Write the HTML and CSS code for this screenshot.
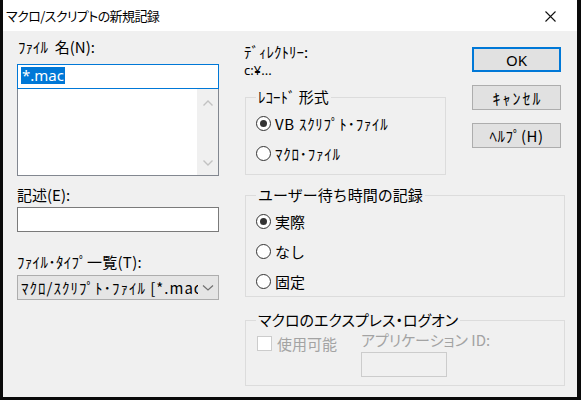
FILE: index.html
```html
<!DOCTYPE html>
<html lang="ja">
<head>
<meta charset="utf-8">
<title>マクロ/スクリプトの新規記録</title>
<link rel="stylesheet" href="styles.css">
</head>
<body>
<div class="window">
  <div class="titlebar">
    <span class="title">マクロ/スクリプトの新規記録</span>
    <svg class="close" width="11" height="11" viewBox="0 0 11 11"><path d="M0.5 0.5 L10.5 10.5 M10.5 0.5 L0.5 10.5" stroke="#111" stroke-width="1.1" fill="none"/></svg>
  </div>
  <div class="content">
    <div class="left">
      <div class="label lbl-name">ﾌｧｲﾙ&nbsp; 名(N):</div>
      <div class="input focused"><span class="sel">*.mac</span></div>
      <div class="list">
        <div class="scroll">
          <svg width="12" height="8" viewBox="0 0 12 8"><path d="M1.5 6.5 L6 2 L10.5 6.5" stroke="#c2c2c2" stroke-width="1.4" fill="none"/></svg>
          <svg width="12" height="8" viewBox="0 0 12 8"><path d="M1.5 1.5 L6 6 L10.5 1.5" stroke="#c2c2c2" stroke-width="1.4" fill="none"/></svg>
        </div>
      </div>
      <div class="label lbl-desc">記述(E):</div>
      <div class="input plain"></div>
      <div class="label lbl-type">ﾌｧｲﾙ･ﾀｲﾌﾟ一覧(T):</div>
      <div class="combo">
        <span class="combo-text">ﾏｸﾛ/ｽｸﾘﾌﾟﾄ･ﾌｧｲﾙ [*.mac]</span>
        <svg class="chev" width="12" height="8" viewBox="0 0 12 8"><path d="M1 1.5 L6 6 L11 1.5" stroke="#707070" stroke-width="1.2" fill="none"/></svg>
      </div>
    </div>
    <div class="right">
      <div class="top">
        <div class="mid">
          <div class="label dir">ﾃﾞｨﾚｸﾄﾘｰ:</div>
          <div class="path">c:¥...</div>
          <fieldset class="group g1">
            <legend>ﾚｺｰﾄﾞ 形式</legend>
            <div class="opt"><span class="radio on"></span><span>VB ｽｸﾘﾌﾟﾄ･ﾌｧｲﾙ</span></div>
            <div class="opt"><span class="radio"></span><span>ﾏｸﾛ･ﾌｧｲﾙ</span></div>
          </fieldset>
        </div>
        <div class="buttons">
          <div class="btn default">OK</div>
          <div class="btn cancel">ｷｬﾝｾﾙ</div>
          <div class="btn">ﾍﾙﾌﾟ(H)</div>
        </div>
      </div>
      <fieldset class="group g2">
        <legend>ユーザー待ち時間の記録</legend>
        <div class="opt"><span class="radio on"></span><span>実際</span></div>
        <div class="opt"><span class="radio"></span><span>なし</span></div>
        <div class="opt"><span class="radio"></span><span>固定</span></div>
      </fieldset>
      <fieldset class="group g3">
        <legend class="pl">マクロのエクスプレス・ログオン</legend>
        <div class="g3row">
          <div class="chk-row"><span class="check"></span><span class="dis">使用可能</span></div>
          <div class="appcol">
            <div class="dis pl applbl">アプリケーション ID:</div>
            <div class="input disabled"></div>
          </div>
        </div>
      </fieldset>
    </div>
  </div>
</div>
</body>
</html>
```

FILE: styles.css
```css
* { box-sizing: border-box; }
html, body {
  margin: 0;
  padding: 0;
  background: #0a0a0a;
  width: 581px;
  height: 400px;
  overflow: hidden;
}
body {
  font-family: "Noto Sans CJK JP", "Noto Sans", sans-serif;
  font-size: 15px;
  color: #000;
}
.window {
  margin-left: 3px;
  width: 574px;
  height: 397px;
  background: #f0f0f0;
  display: flex;
  flex-direction: column;
}
.titlebar {
  height: 31px;
  background: #fff;
  display: flex;
  align-items: center;
  padding-left: 3px;
  padding-right: 21px;
}
.title {
  flex: 1;
  font-size: 13px;
  font-feature-settings: "palt";
  letter-spacing: -0.6px;
  line-height: 18px;
}
.close { display: block; margin-top: 1px; }
.content {
  display: flex;
  padding-left: 14px;
  gap: 25px;
}
.left {
  width: 202px;
  display: flex;
  flex-direction: column;
}
.label {
  line-height: 18px;
  height: 18px;
  white-space: nowrap;
}
.lbl-name { margin-top: 7px; padding-left: 1px; }
.input {
  height: 25px;
  background: #fff;
  border: 1px solid #7a7a7a;
}
.input.focused {
  margin-top: 8px;
  border-color: #0078d7;
  padding: 2px 0 0 3px;
  line-height: 17px;
  font-family: "Noto Sans", sans-serif;
  font-size: 15px;
}
.sel {
  background: #0078d7;
  color: #fff;
  display: inline-block;
  padding: 0 1px;
}
.list {
  height: 87px;
  background: #fff;
  border: 1px solid #828790;
  border-top: none;
  display: flex;
  justify-content: flex-end;
}
.scroll {
  width: 21px;
  background: #f0f0f0;
  display: flex;
  flex-direction: column;
  justify-content: space-between;
  align-items: center;
  padding: 10px 0 8px;
}
.scroll svg { display: block; }
.lbl-desc { margin-top: 10px; }
.input.plain { margin-top: 3px; }
.lbl-type { margin-top: 21px; letter-spacing: 0.3px; }
.combo {
  margin-top: 4px;
  height: 25px;
  background: #e5e5e5;
  border: 1px solid #adadad;
  display: flex;
  align-items: center;
  padding-left: 3px;
  padding-right: 4px;
  overflow: hidden;
}
.combo-text {
  flex: 1;
  white-space: nowrap;
  overflow: hidden;
  line-height: 18px;
  letter-spacing: 1px;
}
.chev { display: block; flex: none; margin-left: 4px; }
.right {
  width: 321px;
  display: flex;
  flex-direction: column;
}
.top {
  display: flex;
  gap: 26px;
}
.mid {
  width: 202px;
  display: flex;
  flex-direction: column;
}
.dir { margin-top: 12px; }
.path {
  line-height: 18px;
  font-size: 13px;
  font-family: "Noto Sans", sans-serif;
}
.group {
  margin: 0;
  border: 1px solid #dcdcdc;
  padding: 2px 0 0 10px;
  min-width: 0;
}
.group legend {
  padding: 0 2px;
  line-height: 18px;
  white-space: nowrap;
}
.g1 {
  margin-top: 9px;
  margin-left: 1px;
  padding-bottom: 6px;
}
.g1 legend { font-size: 15px; }
.g1 .opt { font-size: 15px; letter-spacing: 0.7px; }
.opt {
  height: 30px;
  display: flex;
  align-items: center;
  white-space: nowrap;
}
.radio {
  width: 15px;
  height: 15px;
  border: 1px solid #333;
  border-radius: 50%;
  background: #fff;
  margin-right: 4px;
  display: flex;
  align-items: center;
  justify-content: center;
  flex: none;
}
.radio.on::after {
  content: "";
  width: 7px;
  height: 7px;
  border-radius: 50%;
  background: #333;
}
.buttons {
  width: 89px;
  display: flex;
  flex-direction: column;
  gap: 13px;
  padding-top: 16px;
}
.btn {
  height: 25px;
  background: #e1e1e1;
  border: 1px solid #adadad;
  display: flex;
  align-items: center;
  justify-content: center;
  letter-spacing: 0.5px;
  font-size: 15px;
}
.btn.cancel { letter-spacing: 2px; font-size: 16px; padding-left: 2px; }
.btn.default {
  border: 2px solid #0078d7;
  letter-spacing: 0;
  font-family: "Noto Sans", sans-serif;
  font-size: 15px;
}
.pl { font-feature-settings: "palt"; }
.g2 {
  margin-top: 11px;
  margin-left: 1px;
  padding-bottom: 0;
}
.g2 legend { font-size: 15px; }
.g3 {
  margin-top: 14px;
  margin-left: 1px;
  padding-bottom: 8px;
}
.g3 legend { font-size: 15px; }
.g3row {
  display: flex;
}
.chk-row {
  width: 105px;
  height: 20px;
  display: flex;
  align-items: center;
  margin-top: 2px;
}
.check {
  width: 15px;
  height: 15px;
  border: 1px solid #cccccc;
  background: #fff;
  margin-left: 1px;
  margin-right: 5px;
  flex: none;
}
.dis { color: #a3a3a3; }
.appcol {
  display: flex;
  flex-direction: column;
}
.applbl {
  line-height: 18px;
  white-space: nowrap;
}
.input.disabled {
  margin-top: 3px;
  width: 86px;
  background: #f0f0f0;
  border-color: #cccccc;
}
```
